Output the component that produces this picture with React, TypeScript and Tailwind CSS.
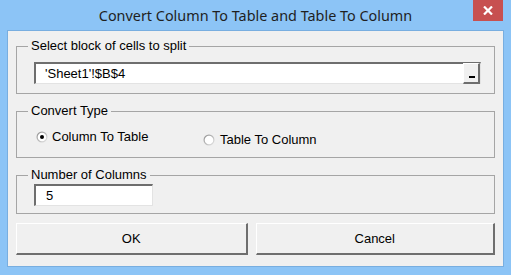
import React from "react";

const Radio = ({ checked }: { checked: boolean }) => (
  <svg width="12" height="12" viewBox="0 0 12 12" className="shrink-0">
    <defs>
      <linearGradient id={checked ? "rg1" : "rg2"} x1="0" y1="0" x2="1" y2="1">
        <stop offset="0" stopColor="#8c8c8c" />
        <stop offset="1" stopColor="#e8e8e8" />
      </linearGradient>
    </defs>
    <circle cx="6" cy="6" r="5.5" fill={`url(#${checked ? "rg1" : "rg2"})`} />
    <circle cx="6" cy="6" r="4.3" fill="#ffffff" />
    {checked && <circle cx="6" cy="6" r="2" fill="#000000" />}
  </svg>
);

export default function App() {
  const body = { fontFamily: '"Liberation Sans", Arial, sans-serif' };
  return (
    <div className="w-[511px] h-[275px] bg-[#8cc4f6] flex flex-col overflow-hidden" style={body}>
      {/* title bar */}
      <div className="relative h-[30px] flex items-center justify-center">
        <span
          className="text-[14.4px] text-[#1f1f1f] leading-none mt-[2px]"
          style={{ fontFamily: '"Noto Sans", "Open Sans", sans-serif' }}
        >
          Convert Column To Table and Table To Column
        </span>
        <div className="absolute right-[8px] top-0 w-[30px] h-[21px] bg-[#c75050] flex items-center justify-center">
          <svg width="10" height="9" viewBox="0 0 10 9">
            <path d="M1 0.5 L9 8.5 M9 0.5 L1 8.5" stroke="#ffffff" strokeWidth="2.2" />
          </svg>
        </div>
      </div>

      {/* client */}
      <div className="mx-[7px] h-[237px] border border-[#78aee0] bg-[#f0f0f0] flex flex-col px-[8px] pt-[15px] relative">
        {/* group 1 */}
        <div className="relative h-[48px] border border-[#a5a5a5] pl-[17px] pt-[15px]">
          <span className="absolute -top-[9px] left-[11px] px-[3px] bg-[#f0f0f0] text-[13px] leading-[15px] text-black">
            Select block of cells to split
          </span>
          <div className="w-[447px] h-[22px] bg-white border-t-2 border-l-2 border-t-[#6e6e6e] border-l-[#6e6e6e] border-b border-r border-b-[#e3e3e3] border-r-[#e3e3e3] flex items-center relative">
            <span className="pl-[9px] text-[13px] leading-[15px] text-black">'Sheet1'!$B$4</span>
            <div className="absolute right-0 top-[-1px] w-[17px] h-[21px] bg-[#f0f0f0] border-t border-l border-t-white border-l-white border-b-2 border-r-2 border-b-[#6e6e6e] border-r-[#6e6e6e] flex items-end justify-center pb-[4px]">
              <div className="w-[6px] h-[2px] bg-black ml-[1px]" />
            </div>
          </div>
        </div>

        {/* group 2 */}
        <div className="relative h-[47px] mt-[17px] border border-[#a5a5a5] pl-[19px] pt-[17px] flex items-start">
          <span className="absolute -top-[9px] left-[11px] px-[3px] bg-[#f0f0f0] text-[13px] leading-[15px] text-black">
            Convert Type
          </span>
          <div className="w-[167px] flex items-center gap-[4px]">
            <Radio checked />
            <span className="text-[13px] leading-[15px] text-black">Column To Table</span>
          </div>
          <div className="flex items-center gap-[5px] mt-[3px]">
            <Radio checked={false} />
            <span className="text-[13px] leading-[15px] text-black">Table To Column</span>
          </div>
        </div>

        {/* group 3 */}
        <div className="relative h-[39px] mt-[17px] border border-[#a5a5a5] pl-[17px] pt-[8px]">
          <span className="absolute -top-[9px] left-[11px] px-[3px] bg-[#f0f0f0] text-[13px] leading-[15px] text-black">
            Number of Columns
          </span>
          <div className="w-[119px] h-[22px] bg-white border-t-2 border-l-2 border-t-[#6e6e6e] border-l-[#6e6e6e] border-b border-r border-b-[#e3e3e3] border-r-[#e3e3e3] flex items-center">
            <span className="pl-[10px] text-[13px] leading-[15px] text-black">5</span>
          </div>
        </div>

        {/* buttons */}
        <div className="flex mt-[9px] gap-[8px]">
          <div className="w-[232px] h-[32px] bg-[#f0f0f0] border-t border-l border-t-white border-l-white border-b-2 border-r-2 border-b-[#6e6e6e] border-r-[#6e6e6e] flex items-center justify-center text-[13px] text-black">
            OK
          </div>
          <div className="w-[240px] h-[32px] bg-[#f0f0f0] border-t border-l border-t-white border-l-white border-b-2 border-r-2 border-b-[#6e6e6e] border-r-[#6e6e6e] flex items-center justify-center text-[13px] text-black">
            Cancel
          </div>
        </div>
      </div>
    </div>
  );
}
